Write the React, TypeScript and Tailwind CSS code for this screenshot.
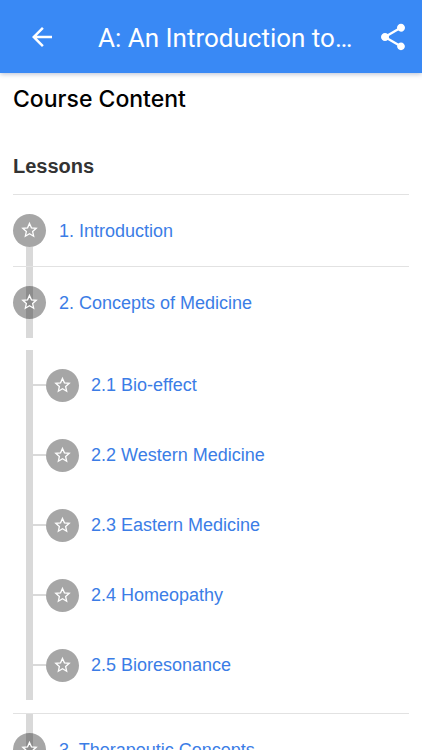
import { MdArrowBack, MdShare } from 'react-icons/md';

interface Topic {
  id: string;
  title: string;
}

interface Lesson {
  id: string;
  title: string;
  topics: Topic[];
}

const lessons: Lesson[] = [
  { id: 'introduction', title: '1. Introduction', topics: [] },
  {
    id: 'concepts-of-medicine',
    title: '2. Concepts of Medicine',
    topics: [
      { id: 'bio-effect', title: '2.1 Bio-effect' },
      { id: 'western-medicine', title: '2.2 Western Medicine' },
      { id: 'eastern-medicine', title: '2.3 Eastern Medicine' },
      { id: 'homeopathy', title: '2.4 Homeopathy' },
      { id: 'bioresonance', title: '2.5 Bioresonance' },
    ],
  },
  { id: 'therapeutic-concepts', title: '3. Therapeutic Concepts', topics: [] },
];

export default function App() {
  return (
    <div className="min-h-screen bg-white font-['Liberation_Sans',Arial,sans-serif]">
      <AppBar title="A: An Introduction to…" />
      <main className="px-[13px] pt-3">
        <h1 className="font-[Inter,sans-serif] text-[23px] leading-7 font-medium text-black">Course Content</h1>
        <h2 className="mt-[41px] mb-4 text-xl leading-6 font-bold text-[#333333]">Lessons</h2>
        <ul>
          {lessons.map((lesson, index) => (
            <LessonItem key={lesson.id} lesson={lesson} isFirst={index === 0} />
          ))}
        </ul>
      </main>
    </div>
  );
}

function AppBar({ title }: { title: string }) {
  return (
    <header className="flex h-[73px] items-center bg-[#3989f5] pr-[13px] pl-[27px] text-white shadow-[0_1px_5px_rgba(40,70,120,0.35)]">
      <button type="button" aria-label="Back" className="shrink-0">
        <MdArrowBack className="size-[30px]" />
      </button>
      <div className="min-w-0 flex-1 pt-[2px] pr-5 pl-[41px]">
        <p className="truncate font-[Roboto,sans-serif] text-[26px] leading-8 font-normal">{title}</p>
      </div>
      <button type="button" aria-label="Share" className="shrink-0">
        <MdShare className="size-8" />
      </button>
    </header>
  );
}

function LessonItem({ lesson, isFirst }: { lesson: Lesson; isFirst: boolean }) {
  return (
    <li className="border-t border-[#e2e2e2]">
      <div className="relative flex h-[71px] items-center gap-[13px]">
        {/* the rail starts under the first badge and runs behind the others */}
        <span
          className={
            isFirst
              ? 'absolute top-[52px] bottom-0 left-[13px] w-[7px] bg-[#d9d9d9]'
              : 'absolute inset-y-0 left-[13px] w-[7px] bg-[#d9d9d9]'
          }
        />
        <StarBadge />
        <ItemLink id={lesson.id} title={lesson.title} />
      </div>
      {lesson.topics.length > 0 && (
        <ul className="mt-3 mb-[13px] ml-[13px] border-l-[7px] border-[#d9d9d9]">
          {lesson.topics.map((topic) => (
            <li key={topic.id} className="flex h-[70px] items-center">
              <span className="h-[2px] w-[13px] shrink-0 bg-[#d9d9d9]" />
              <StarBadge />
              <span className="w-3 shrink-0" />
              <ItemLink id={topic.id} title={topic.title} />
            </li>
          ))}
        </ul>
      )}
    </li>
  );
}

function ItemLink({ id, title }: { id: string; title: string }) {
  return (
    <a href={`#${id}`} className="text-lg leading-6 text-[#3b7de6]">
      {title}
    </a>
  );
}

function StarBadge() {
  return (
    <span className="relative flex size-[33px] shrink-0 items-center justify-center rounded-full bg-black/35">
      <svg viewBox="0 0 21 21" className="size-[21px]" fill="none" stroke="white" strokeWidth="1.3" aria-hidden="true">
        <path d="M10.5 3.4 L12.44 7.83 L17.25 8.3 L13.64 11.52 L14.67 16.24 L10.5 13.8 L6.33 16.24 L7.36 11.52 L3.75 8.3 L8.56 7.83 Z" />
      </svg>
    </span>
  );
}
